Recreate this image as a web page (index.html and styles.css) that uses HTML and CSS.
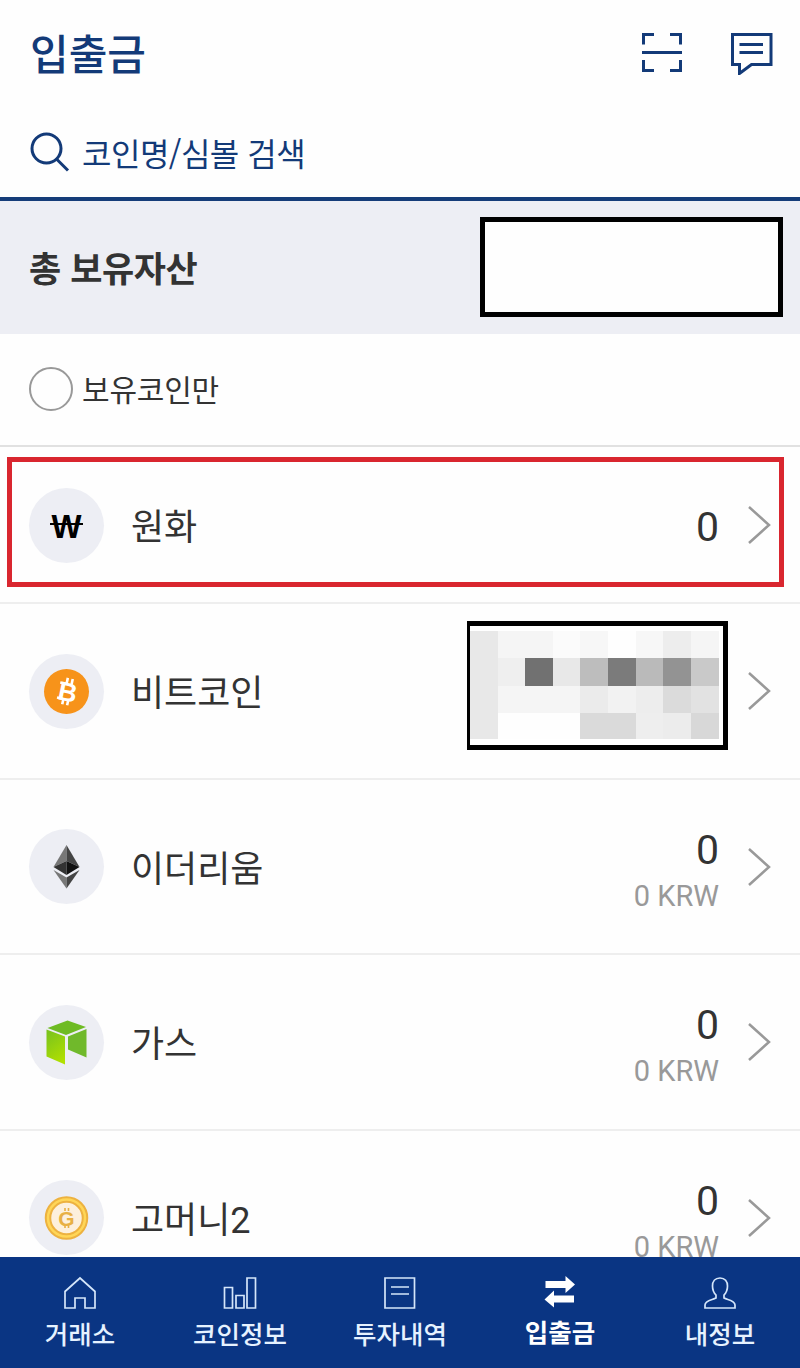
FILE: index.html
```html
<!DOCTYPE html>
<html lang="ko">
<head>
    <meta charset="UTF-8">
    <title>입출금</title>
    <link rel="stylesheet" href="styles.css">
</head>
<body>
    <header class="header">
        <h1>입출금</h1>
        <div class="header-icons">
            <svg class="line-icon" width="42" height="42" viewBox="0 0 42 42">
                <path d="M2.5 13.500V3.500H13M29 3.500H39.500V13.500M39.500 29V39.500H29M13 39.500H2.500V29M1 21.500H41"/>
            </svg>
            <svg class="line-icon" width="44" height="44" viewBox="0 0 44 44">
                <path d="M2.500 3.500H41V33.500H21.500L9.500 42.500V33.500H2.500ZM9.500 13.500H33M9.500 21.500H33"/>
            </svg>
        </div>
    </header>

    <div class="search">
        <svg class="line-icon" width="40" height="40" viewBox="0 0 40 40">
            <circle cx="16.500" cy="16.500" r="14.500"/>
            <path d="M26.500 27L38 38.500"/>
        </svg>
        <span>코인명/심볼 검색</span>
    </div>

    <div class="total">
        <h2>총 보유자산</h2>
        <div class="total-box"></div>
    </div>

    <div class="filter">
        <span class="radio"></span>
        <span>보유코인만</span>
    </div>

    <ul class="coins">
        <li class="coin krw">
            <div class="coin-icon">
                <svg width="75" height="75" viewBox="0 0 75 75">
                    <text class="won" x="37.500" y="50" textLength="30" lengthAdjust="spacingAndGlyphs">W</text>
                    <path d="M21 36H54" stroke="#000" stroke-width="2.200"/>
                </svg>
            </div>
            <span class="name">원화</span>
            <div class="amount"><b>0</b></div>
            <svg class="arrow" width="24" height="40" viewBox="0 0 24 40"><path d="M2 2L22 20L2 38"/></svg>
        </li>
        <li class="coin">
            <div class="coin-icon">
                <svg width="75" height="75" viewBox="0 0 75 75">
                    <circle cx="37.500" cy="37.500" r="22.500" fill="#f7931a"/>
                    <g transform="rotate(12 38 37.500)">
                        <path d="M36 24V30M41 24V30M36 45V51M41 45V51M29.500 30H35M29.500 45.500H35" stroke="#fff" stroke-width="2.600"/>
                        <text class="btc" x="39" y="47">B</text>
                    </g>
                </svg>
            </div>
            <span class="name">비트코인</span>
            <div class="masked">
                <svg width="249" height="108" viewBox="0 0 249 108" shape-rendering="crispEdges">
                    <rect width="249" height="108" fill="#f5f5f5"/>
                    <rect width="28" height="108" fill="#e8e8e8"/>
                    <rect x="83" width="27" height="27" fill="#fbfbfb"/>
                    <rect x="110" width="28" height="27" fill="#f7f7f7"/>
                    <rect x="138" width="28" height="27" fill="#fefefe"/>
                    <rect x="166" width="27" height="27" fill="#f7f7f7"/>
                    <rect x="193" width="28" height="27" fill="#ededed"/>
                    <rect x="28" y="27" width="27" height="28" fill="#efefef"/>
                    <rect x="55" y="27" width="28" height="28" fill="#717171"/>
                    <rect x="83" y="27" width="27" height="28" fill="#e8e8e8"/>
                    <rect x="110" y="27" width="28" height="28" fill="#bdbdbd"/>
                    <rect x="138" y="27" width="28" height="28" fill="#7b7b7b"/>
                    <rect x="166" y="27" width="27" height="28" fill="#bababa"/>
                    <rect x="193" y="27" width="28" height="28" fill="#939393"/>
                    <rect x="221" y="27" width="28" height="28" fill="#c9c9c9"/>
                    <rect x="110" y="55" width="28" height="27" fill="#ebebeb"/>
                    <rect x="138" y="55" width="28" height="27" fill="#f2f2f2"/>
                    <rect x="166" y="55" width="27" height="27" fill="#ededed"/>
                    <rect x="193" y="55" width="28" height="27" fill="#dbdbdb"/>
                    <rect x="221" y="55" width="28" height="27" fill="#e2e2e2"/>
                    <rect x="28" y="82" width="82" height="26" fill="#fefefe"/>
                    <rect x="110" y="82" width="56" height="26" fill="#dadada"/>
                    <rect x="166" y="82" width="27" height="26" fill="#eeeeee"/>
                    <rect x="193" y="82" width="28" height="26" fill="#ececec"/>
                    <rect x="221" y="82" width="28" height="26" fill="#d8d8d8"/>
                </svg>
            </div>
            <svg class="arrow" width="24" height="40" viewBox="0 0 24 40"><path d="M2 2L22 20L2 38"/></svg>
        </li>
        <li class="coin">
            <div class="coin-icon">
                <svg width="75" height="75" viewBox="0 0 75 75">
                    <path d="M37.500 16L24.500 38L37.500 32Z" fill="#777"/>
                    <path d="M37.500 16L50.500 38L37.500 32Z" fill="#444"/>
                    <path d="M24.500 38L37.500 32V46Z" fill="#333"/>
                    <path d="M50.500 38L37.500 32V46Z" fill="#111"/>
                    <path d="M24.500 41L37.500 48.500V59.500Z" fill="#777"/>
                    <path d="M50.500 41L37.500 48.500V59.500Z" fill="#444"/>
                </svg>
            </div>
            <span class="name">이더리움</span>
            <div class="amount"><b>0</b><span>0 KRW</span></div>
            <svg class="arrow" width="24" height="40" viewBox="0 0 24 40"><path d="M2 2L22 20L2 38"/></svg>
        </li>
        <li class="coin">
            <div class="coin-icon">
                <svg width="75" height="75" viewBox="0 0 75 75">
                    <defs>
                        <linearGradient id="gas" x1="0.300" y1="0" x2="0.700" y2="1">
                            <stop offset="0" stop-color="#7cc41c"/>
                            <stop offset="1" stop-color="#b2e000"/>
                        </linearGradient>
                    </defs>
                    <path d="M18.500 23L38.500 15.500L57 22L37 30Z" fill="#6ebb23"/>
                    <path d="M17.500 24.500L36 31.500V59.500L17.500 51.500Z" fill="url(#gas)"/>
                    <path d="M39 31.500L57.500 24V52.500L39 44.500Z" fill="#70b92b"/>
                </svg>
            </div>
            <span class="name">가스</span>
            <div class="amount"><b>0</b><span>0 KRW</span></div>
            <svg class="arrow" width="24" height="40" viewBox="0 0 24 40"><path d="M2 2L22 20L2 38"/></svg>
        </li>
        <li class="coin">
            <div class="coin-icon">
                <svg width="75" height="75" viewBox="0 0 75 75">
                    <circle cx="37.500" cy="38" r="18.500" fill="#fdf0dc" stroke="#edb240" stroke-width="6.500"/>
                    <circle cx="37.500" cy="38" r="18.500" fill="none" stroke="#ffd657" stroke-width="2.500"/>
                    <path d="M36 28V31M39.500 28V31M36 45V48M39.500 45V48" stroke="#e8b044" stroke-width="1.600"/>
                    <text class="gom" x="37.300" y="45.500">G</text>
                </svg>
            </div>
            <span class="name">고머니2</span>
            <div class="amount"><b>0</b><span>0 KRW</span></div>
            <svg class="arrow" width="24" height="40" viewBox="0 0 24 40"><path d="M2 2L22 20L2 38"/></svg>
        </li>
    </ul>

    <nav class="tabs">
        <a class="tab">
            <svg width="34" height="34" viewBox="0 0 34 34"><path d="M2 15.500L17 2L32 15.500V32H22V22H12V32H2Z"/></svg>
            <span>거래소</span>
        </a>
        <a class="tab">
            <svg width="34" height="34" viewBox="0 0 34 34"><path d="M1.500 11.500H9.500V32H1.500ZM13 19.500H21V32H13ZM24 2H32.500V32H24Z"/></svg>
            <span>코인정보</span>
        </a>
        <a class="tab">
            <svg width="34" height="34" viewBox="0 0 34 34"><path d="M2 2H31.500V32H2ZM8 11H26M8 18H26"/></svg>
            <span>투자내역</span>
        </a>
        <a class="tab active">
            <svg width="34" height="34" viewBox="0 0 34 34"><path d="M2.500 5H22.500V0L32 8.500L22.500 17V12H2.500ZM31 19.500H11V14.500L1.500 23.500L11 31.500V26.500H31Z"/></svg>
            <span>입출금</span>
        </a>
        <a class="tab">
            <svg width="34" height="34" viewBox="0 0 34 34"><path d="M17 2C12 2 9.500 5.500 9.500 10C9.500 14 11 17 13 19V22C9 24 2 24.500 2 29V32H32V29C32 24.500 25 24 21 22V19C23 17 24.500 14 24.500 10C24.500 5.500 22 2 17 2Z"/></svg>
            <span>내정보</span>
        </a>
    </nav>
</body>
</html>
```
FILE: styles.css
```css
* {
    box-sizing: border-box;
}
body {
    margin: 0;
    height: 1368px;
    display: flex;
    flex-direction: column;
    overflow: hidden;
    background-color: #fefefe;
    color: #333;
    font-family: Roboto, "Noto Sans CJK KR", sans-serif;
}
h1, h2 {
    margin: 0;
}
.header {
    display: flex;
    justify-content: space-between;
    align-items: center;
    height: 106px;
    padding: 0 26px 0 30px;
    color: #133a78;
}
h1 {
    padding-bottom: 3px;
    font-family: "Noto Sans CJK KR", sans-serif;
    font-size: 42px;
    font-weight: 500;
}
.header-icons {
    display: flex;
    gap: 47px;
}
.line-icon {
    fill: none;
    stroke: #133a78;
    stroke-width: 3;
}
.search {
    display: flex;
    align-items: center;
    gap: 12px;
    height: 95px;
    padding: 1px 30px 0;
    border-bottom: 4px solid #153c79;
    color: #133a78;
    font-family: "Noto Sans CJK KR", sans-serif;
    font-size: 32px;
    letter-spacing: -0.5px;
}
.total {
    display: flex;
    justify-content: space-between;
    align-items: center;
    height: 133px;
    padding: 0 17px 2px 29px;
    background-color: #edeef4;
}
h2 {
    font-family: "Noto Sans CJK KR", sans-serif;
    font-size: 35px;
    font-weight: 700;
    letter-spacing: -0.4px;
}
.total-box {
    width: 303px;
    height: 100px;
    border: 5px solid #000;
    background-color: #fefefe;
}
.filter {
    display: flex;
    align-items: center;
    gap: 9px;
    height: 113px;
    padding: 0 0 2px 29px;
    border-bottom: 2px solid #e1e1e1;
    font-family: "Noto Sans CJK KR", sans-serif;
    font-size: 30px;
    letter-spacing: -0.2px;
}
.filter span:last-child {
    padding-bottom: 2px;
}
.radio {
    width: 44px;
    height: 44px;
    border: 2px solid #999;
    border-radius: 50%;
}
.coins {
    flex: 1;
    min-height: 0;
    overflow: hidden;
    margin: 0;
    padding: 0;
    list-style: none;
}
.coin {
    display: flex;
    align-items: center;
    height: 175.5px;
    padding: 1px 29px 0;
    border-bottom: 2px solid #eee;
}
.krw {
    position: relative;
    height: 157px;
}
/* red frame around the won row */
.krw::after {
    content: "";
    box-sizing: border-box;
    position: absolute;
    left: 7px;
    top: 10px;
    width: 777px;
    height: 130px;
    border: 5px solid #d9262f;
}
.coin-icon {
    width: 75px;
    height: 75px;
    border-radius: 50%;
    background-color: #edeef4;
}
.name {
    flex: 1;
    margin-left: 27px;
    padding-bottom: 2px;
    font-size: 36px;
}
.amount {
    display: flex;
    flex-direction: column;
    align-items: flex-end;
    margin-right: 28px;
    padding-top: 10px;
}
.krw .amount {
    padding-top: 3px;
}
.amount b {
    font-size: 41px;
    font-weight: 400;
    line-height: 48px;
}
.amount span {
    color: #999;
    font-size: 29px;
    line-height: 44px;
}
.masked {
    width: 261px;
    height: 129px;
    margin: 0 19px 11px 0;
    padding-top: 5px;
    border: 5px solid #000;
    border-left-width: 3px;
    background-color: #fff;
}
.arrow {
    fill: none;
    stroke: #999;
    stroke-width: 2.5;
}
svg text {
    text-anchor: middle;
    font-family: "Liberation Sans", sans-serif;
    font-weight: 700;
}
.won {
    font-size: 34px;
}
.btc {
    font-size: 26px;
    fill: #fff;
}
.gom {
    font-size: 21px;
    fill: #e8b044;
}
.tabs {
    display: grid;
    grid-template-columns: repeat(5, 1fr);
    height: 111px;
    background-color: #0a3583;
    color: #e6f2ff;
}
.tab {
    display: flex;
    flex-direction: column;
    align-items: center;
    gap: 4px;
    padding-top: 19px;
    font-family: "Noto Sans CJK KR", sans-serif;
    font-size: 25.5px;
    font-weight: 500;
}
.tab svg {
    fill: none;
    stroke: #d5e6fa;
    stroke-width: 1.7;
}
.active {
    gap: 2px;
    color: #fff;
    font-weight: 700;
}
.active svg {
    fill: #fff;
    stroke: none;
}
```
